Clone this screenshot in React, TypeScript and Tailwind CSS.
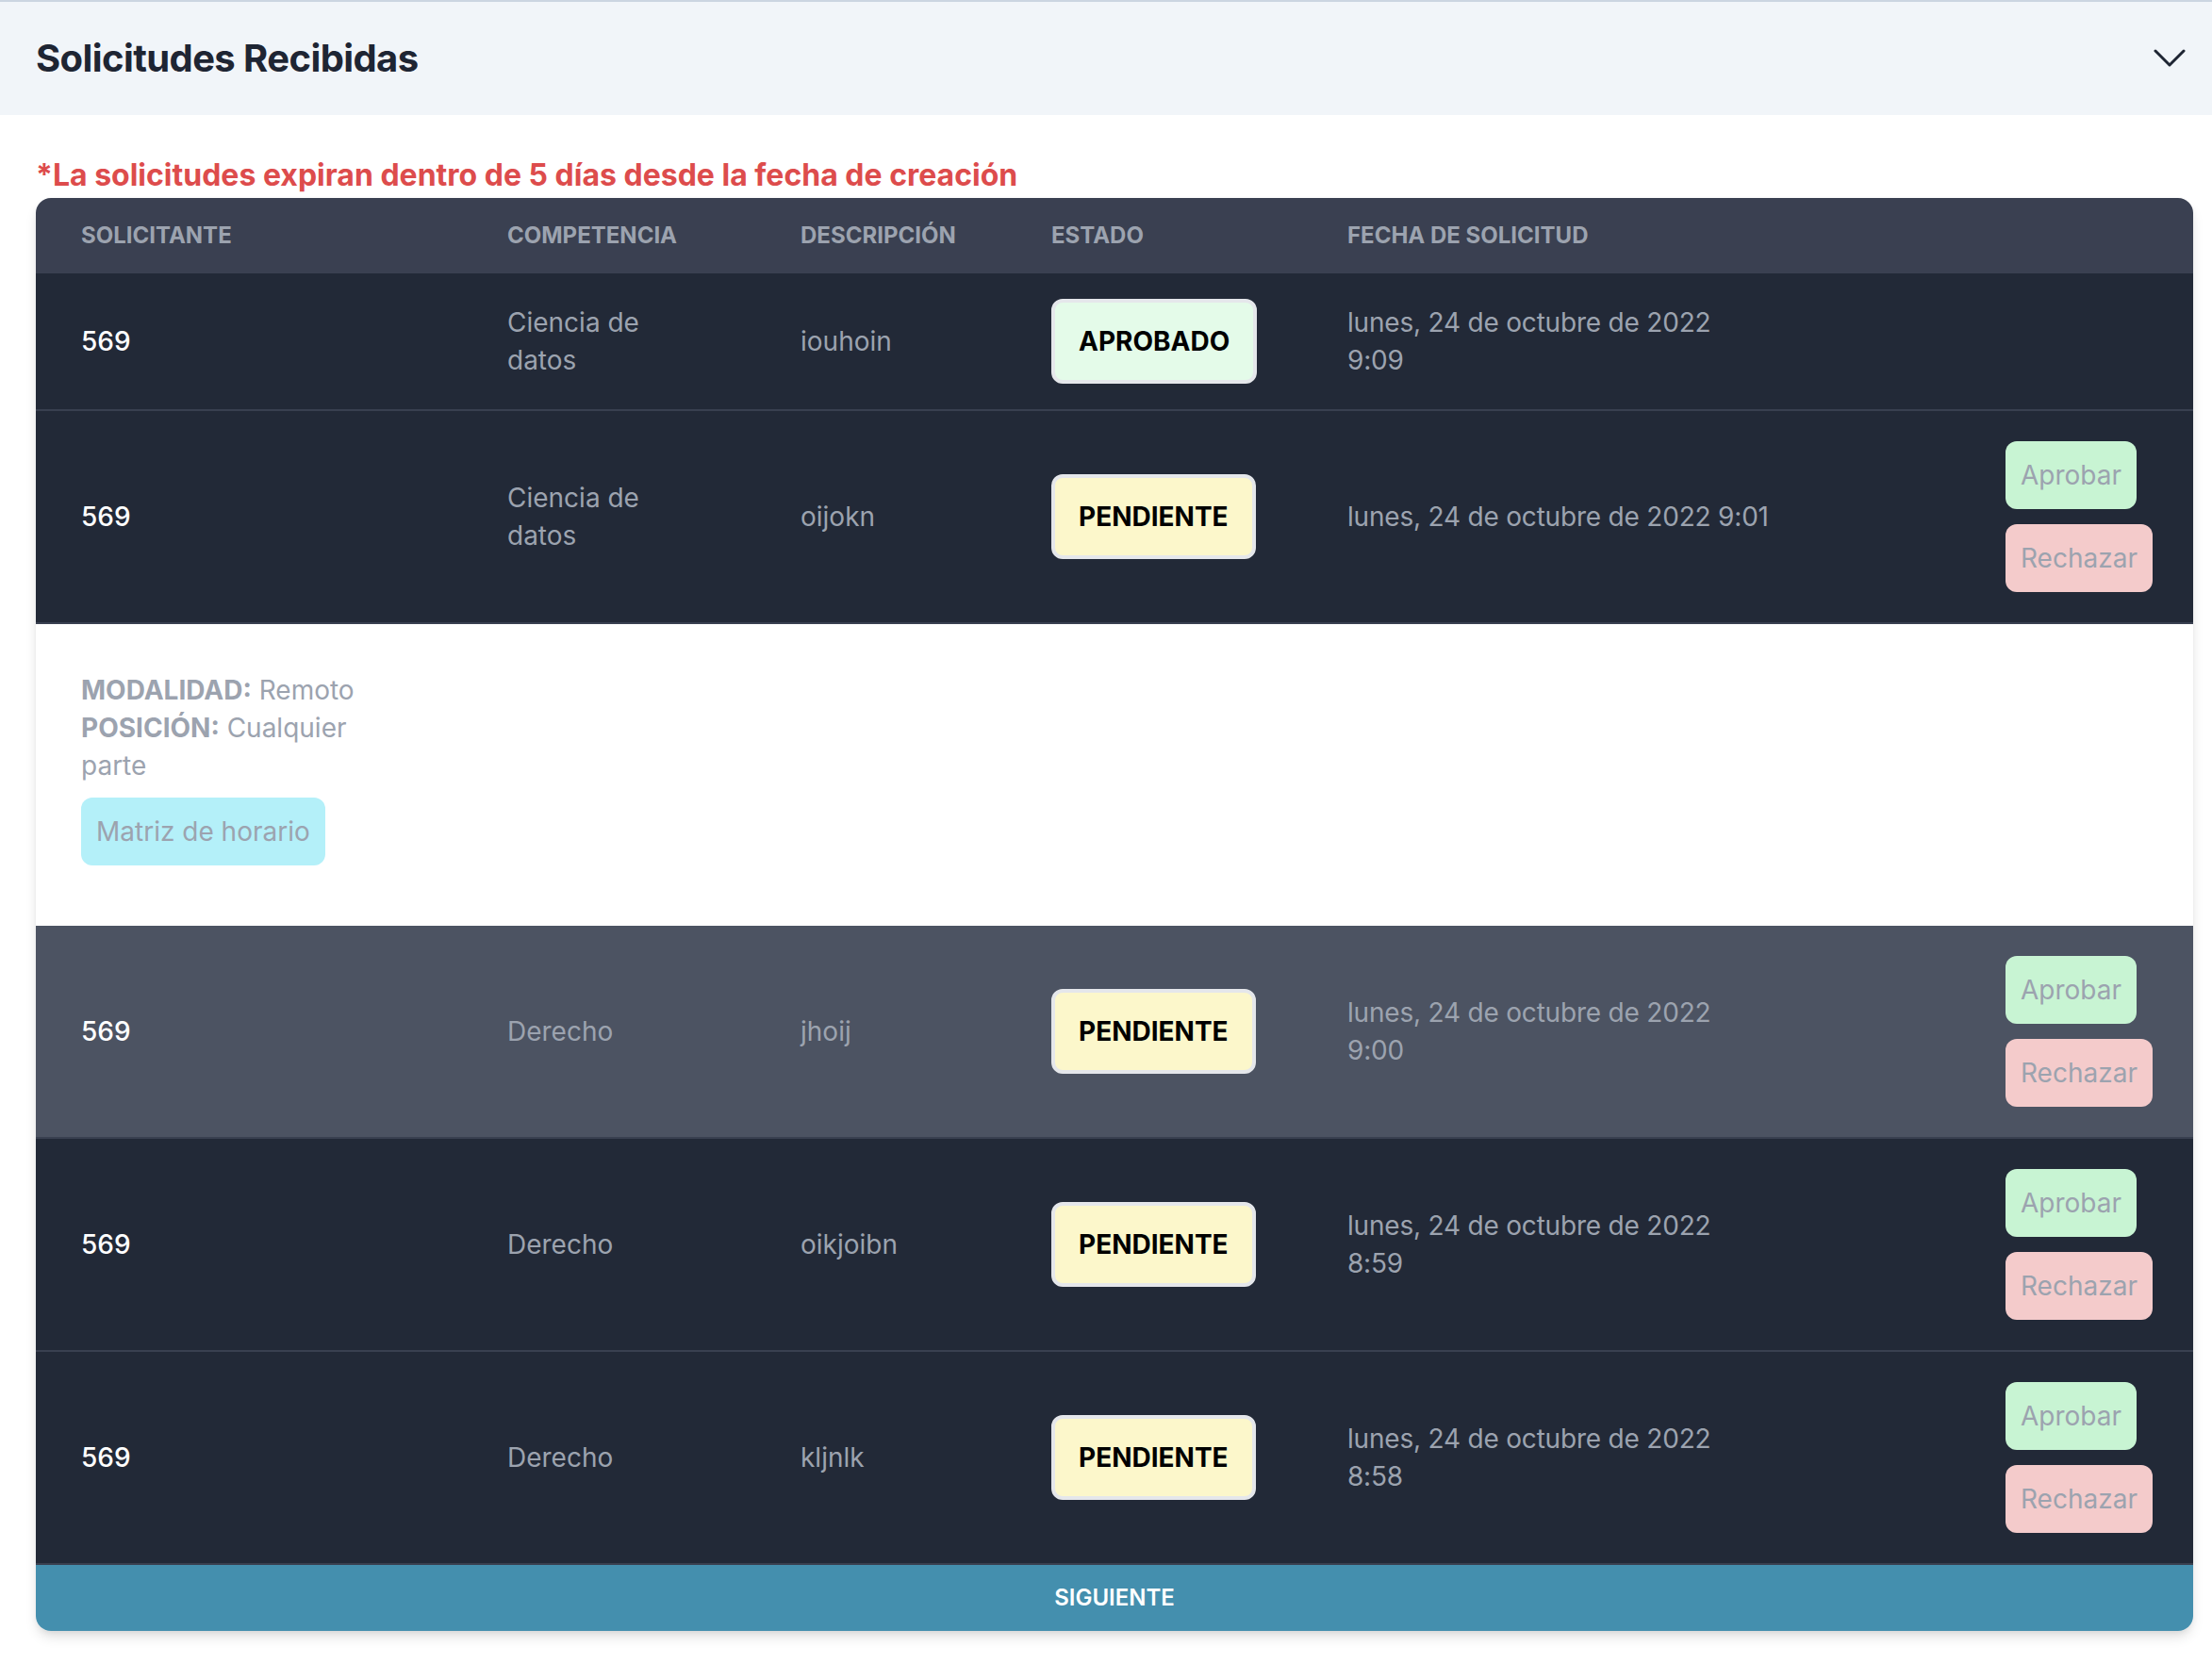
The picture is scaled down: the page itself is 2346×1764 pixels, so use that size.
import React from "react";

type Status = "APROBADO" | "PENDIENTE";

interface Request {
  applicant: string;
  competence: string;
  description: string;
  status: Status;
  date: string[];
  actions: boolean;
  hovered?: boolean;
  details?: boolean;
}

const requests: Request[] = [
  {
    applicant: "569",
    competence: "Ciencia de datos",
    description: "iouhoin",
    status: "APROBADO",
    date: ["lunes, 24 de octubre de 2022", "9:09"],
    actions: false,
  },
  {
    applicant: "569",
    competence: "Ciencia de datos",
    description: "oijokn",
    status: "PENDIENTE",
    date: ["lunes, 24 de octubre de 2022 9:01"],
    actions: true,
    details: true,
  },
  {
    applicant: "569",
    competence: "Derecho",
    description: "jhoij",
    status: "PENDIENTE",
    date: ["lunes, 24 de octubre de 2022", "9:00"],
    actions: true,
    hovered: true,
  },
  {
    applicant: "569",
    competence: "Derecho",
    description: "oikjoibn",
    status: "PENDIENTE",
    date: ["lunes, 24 de octubre de 2022", "8:59"],
    actions: true,
  },
  {
    applicant: "569",
    competence: "Derecho",
    description: "kljnlk",
    status: "PENDIENTE",
    date: ["lunes, 24 de octubre de 2022", "8:58"],
    actions: true,
  },
];

const cols = "grid grid-cols-[452px_311px_266px_314px_1fr_247px]";

const StatusBadge = ({ status }: { status: Status }) => (
  <span
    className={
      status === "APROBADO"
        ? "-my-[6px] inline-block rounded-[12px] border-[4px] border-[#e5e7eb] bg-[#e4fbe9] px-[25px] py-[21px] text-[28px] font-bold leading-[40px] text-black"
        : "-my-[6px] inline-block rounded-[12px] border-[4px] border-[#e5e7eb] bg-[#fcf7cb] px-[25px] py-[21px] text-[28px] font-bold leading-[40px] text-black"
    }
  >
    {status}
  </span>
);

const RequestRow = ({ req }: { req: Request }) => (
  <div
    className={`${cols} items-center border-b-2 border-[#394050] ${
      req.hovered ? "bg-[#4c5362]" : "bg-[#222937]"
    }`}
  >
    <div className="px-[48px] py-[32px] font-medium text-white">{req.applicant}</div>
    <div className="px-[48px] py-[32px]">
      <span className="block max-w-[160px]">{req.competence}</span>
    </div>
    <div className="px-[48px] py-[32px]">{req.description}</div>
    <div className="px-[48px] py-[32px]">
      <StatusBadge status={req.status} />
    </div>
    <div className="px-[48px] py-[32px] tracking-[-0.2px]">
      {req.date.map((line) => (
        <div key={line}>{line}</div>
      ))}
    </div>
    <div className="flex flex-col items-start gap-[16px] px-[48px] py-[32px]">
      {req.actions && (
        <>
          <button className="rounded-[12px] bg-[#c8f4d3] px-[16px] py-[16px] text-[#9ca3af]">Aprobar</button>
          <button className="rounded-[12px] bg-[#f4cbcb] px-[16px] py-[16px] text-[#9ca3af]">Rechazar</button>
        </>
      )}
    </div>
  </div>
);

const Details = () => (
  <div className="bg-white px-[48px] pb-[64px] pt-[50px]">
    <div className="w-[320px] text-[#9ca3af]">
      <p>
        <span className="font-bold">MODALIDAD:</span> Remoto
      </p>
      <p>
        <span className="font-bold">POSICIÓN:</span> Cualquier parte
      </p>
    </div>
    <button className="mt-[14px] rounded-[12px] bg-[#b4f0f9] px-[16px] py-[16px] text-[#9ca3af]">
      Matriz de horario
    </button>
  </div>
);

export default function App() {
  return (
    <div className="min-h-[1764px] bg-white font-['Inter','Noto_Sans',sans-serif]">
      <div className="flex h-[122px] items-center justify-between border-t-2 border-[#cbd5e1] bg-[#f1f5f9] pl-[38px] pr-[28px]">
        <h2 className="text-[40px] font-bold leading-[56px] tracking-[-0.6px] text-[#1e2533]">Solicitudes Recibidas</h2>
        <svg width="34" height="20" viewBox="0 0 34 20" fill="none">
          <polyline points="2,2 17,17 32,2" stroke="#1e2533" strokeWidth="3" strokeLinecap="round" strokeLinejoin="round" />
        </svg>
      </div>

      <div className="pl-[38px] pr-[20px] pt-[41px]">
        <p className="text-[32px] font-bold leading-[46px] text-[#dd4c4c]">
          *La solicitudes expiran dentro de 5 días desde la fecha de creación
        </p>

        <div className="mt-[1px] overflow-hidden rounded-[16px] text-[28px] leading-[40px] text-[#9ca3af] shadow-[0_8px_14px_-2px_rgba(0,0,0,0.12),0_3px_8px_-3px_rgba(0,0,0,0.1)]">
          <div className={`${cols} bg-[#3a4051] text-[24px] font-bold uppercase leading-[32px] text-[#9ca3af]`}>
            <div className="px-[48px] py-[24px]">Solicitante</div>
            <div className="px-[48px] py-[24px]">Competencia</div>
            <div className="px-[48px] py-[24px]">Descripción</div>
            <div className="px-[48px] py-[24px]">Estado</div>
            <div className="px-[48px] py-[24px]">Fecha de solicitud</div>
            <div className="px-[48px] py-[24px]" />
          </div>

          {requests.map((req, i) => (
            <React.Fragment key={i}>
              <RequestRow req={req} />
              {req.details && <Details />}
            </React.Fragment>
          ))}

          <button className="flex h-[70px] w-full items-center justify-center bg-[#448fae] text-[24px] font-semibold leading-[32px] text-white">
            SIGUIENTE
          </button>
        </div>
      </div>
    </div>
  );
}
